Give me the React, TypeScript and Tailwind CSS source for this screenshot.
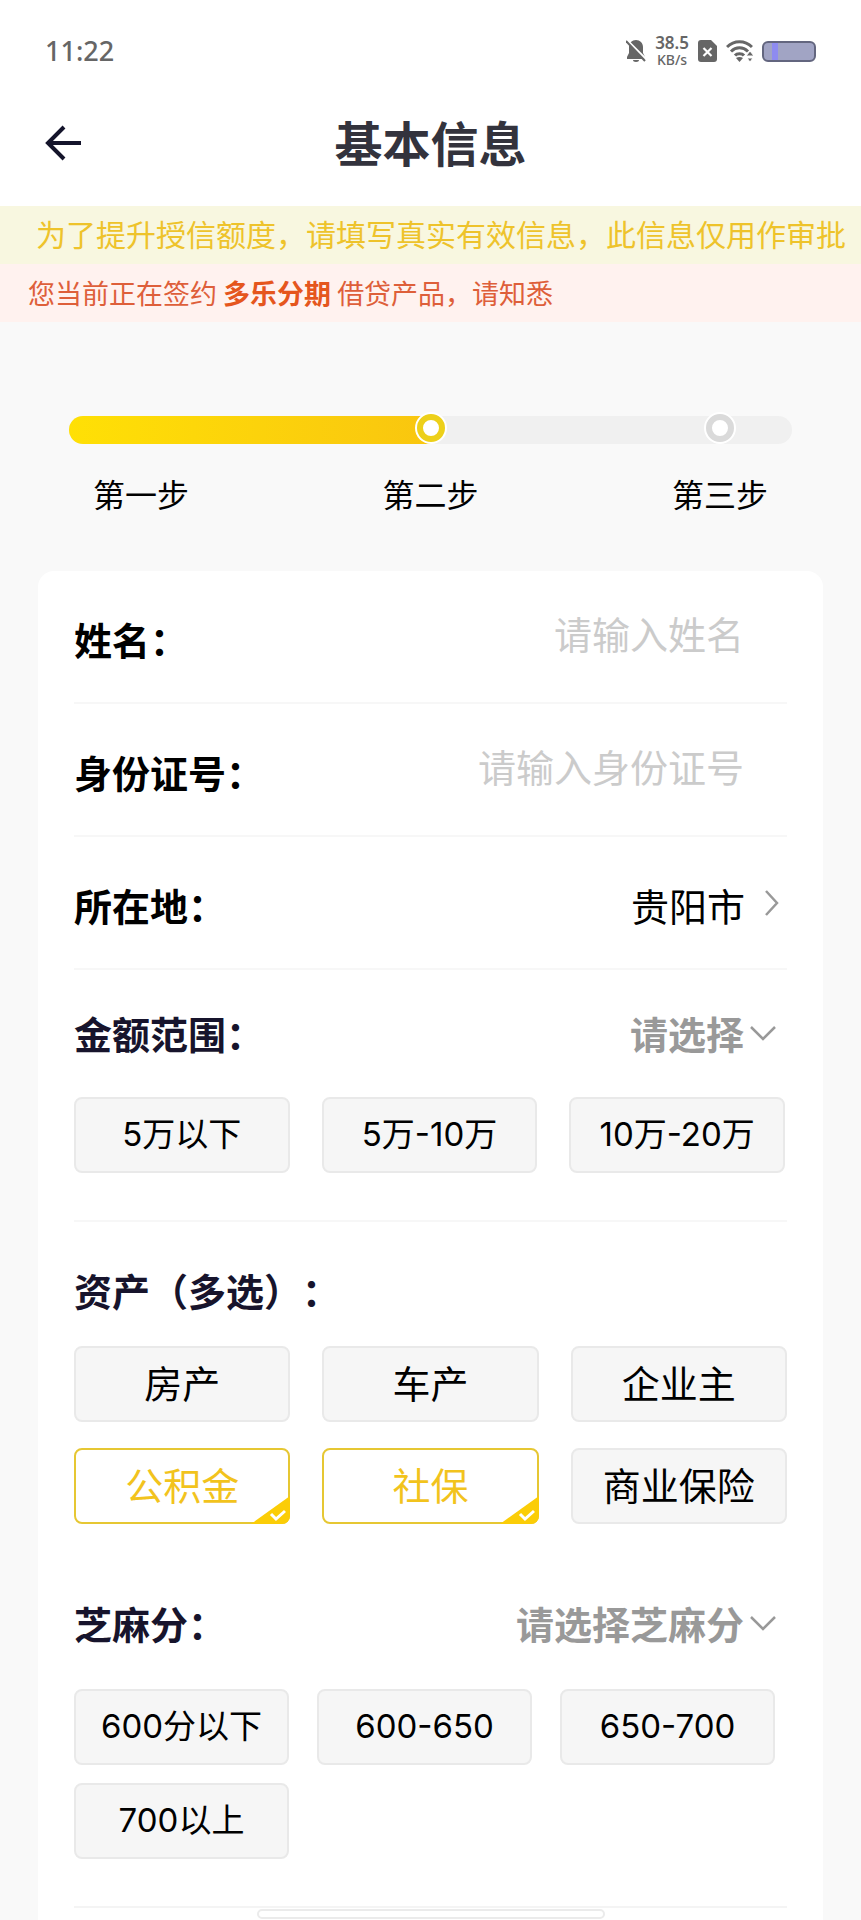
import { useState } from "react";
import type { ReactNode } from "react";

const amounts = ["5万以下", "5万-10万", "10万-20万"];
const assets = ["房产", "车产", "企业主", "公积金", "社保", "商业保险"];
const scores = ["600分以下", "600-650", "650-700", "700以上"];
const steps = ["第一步", "第二步", "第三步"];

export default function App() {
  const [owned, setOwned] = useState<string[]>(["公积金", "社保"]);
  const [amount, setAmount] = useState("");
  const [score, setScore] = useState("");

  function toggleAsset(name: string) {
    setOwned((list) =>
      list.includes(name) ? list.filter((n) => n !== name) : [...list, name],
    );
  }

  return (
    <div className="min-h-screen overflow-hidden bg-[#f9f9f9] font-['Noto_Sans_CJK_SC',sans-serif] text-black [text-spacing-trim:space-all]">
      <div className="bg-white">
        <StatusBar />
        <header className="grid h-[126px] grid-cols-[1fr_auto_1fr] items-center px-[45px]">
          <button type="button" aria-label="返回" className="w-9">
            <svg viewBox="0 0 36 36" fill="none" className="h-9 w-9">
              <path
                d="M36 18H3M19 2 3 18l16 16"
                stroke="#14142b"
                strokeWidth="4"
              />
            </svg>
          </button>
          <h1 className="pb-1 text-[48px] leading-[60px] font-bold text-[#33333d]">
            基本信息
          </h1>
        </header>
      </div>

      <p className="flex h-[58px] items-center overflow-hidden bg-[#f8f7e0] pb-1 pl-9 text-[30px] whitespace-nowrap text-[#eec32b]">
        为了提升授信额度，请填写真实有效信息，此信息仅用作审批
      </p>
      <p className="h-[58px] bg-[#fff2ef] px-7 text-[27px] leading-[58px] text-[#de5f3a]">
        您当前正在签约 <b className="text-[#e5561d]">多乐分期</b>{" "}
        借贷产品，请知悉
      </p>

      <StepProgress />

      <form className="mx-[38px] mt-[54px] rounded-t-2xl bg-white px-9">
        <Row>
          <RowLabel htmlFor="name">姓名：</RowLabel>
          <TextField id="name" placeholder="请输入姓名" />
        </Row>
        <Row>
          <RowLabel htmlFor="idcard">身份证号：</RowLabel>
          <TextField id="idcard" placeholder="请输入身份证号" />
        </Row>
        <Row>
          <span id="city" className="pt-1 text-[38px] font-bold">
            所在地：
          </span>
          <button
            type="button"
            aria-describedby="city"
            className="ml-auto flex items-center gap-5 pr-2"
          >
            <span className="pt-1 text-[38px]">贵阳市</span>
            <svg viewBox="0 0 14 26" fill="none" className="h-[26px] w-[14px]">
              <path d="m1 1 11 12L1 25" stroke="#999" strokeWidth="2.5" />
            </svg>
          </button>
        </Row>

        <section className="border-b-2 border-[#f7f7f7] pb-[47px]">
          <div className="flex h-[127px] items-center pb-0.5">
            <SectionLabel htmlFor="amount">金额范围：</SectionLabel>
            <DropDown
              id="amount"
              placeholder="请选择"
              options={amounts}
              value={amount}
              onChange={setAmount}
            />
          </div>
          <div className="grid grid-cols-3 gap-8 pr-0.5">
            {amounts.map((name) => (
              <Chip
                key={name}
                active={amount === name}
                onClick={() => setAmount(name)}
              >
                {name}
              </Chip>
            ))}
          </div>
        </section>

        <fieldset>
          <legend className="h-[124px] pt-3 text-[38px] leading-[112px] font-bold text-[#17142c]">
            资产（多选）：
          </legend>
          <div className="grid grid-cols-3 gap-x-8 gap-y-[26px]">
            {assets.map((name) => (
              <AssetChip
                key={name}
                label={name}
                checked={owned.includes(name)}
                onChange={() => toggleAsset(name)}
              />
            ))}
          </div>
        </fieldset>

        <section className="border-b-2 border-[#f4f4f4] pt-[34px] pb-[47px]">
          <div className="flex h-[131px] items-center pb-0.5">
            <SectionLabel htmlFor="score">芝麻分：</SectionLabel>
            <DropDown
              id="score"
              placeholder="请选择芝麻分"
              options={scores}
              value={score}
              onChange={setScore}
            />
          </div>
          <div className="grid grid-cols-3 gap-x-7 gap-y-[18px] pr-3">
            {scores.map((name) => (
              <Chip
                key={name}
                active={score === name}
                onClick={() => setScore(name)}
              >
                {name}
              </Chip>
            ))}
          </div>
        </section>
        <div className="h-3" />
      </form>

      <div className="fixed bottom-px left-1/2 h-[10px] w-[348px] -translate-x-1/2 rounded-full border-2 border-[#ebebeb] bg-white" />
    </div>
  );
}

function StatusBar() {
  return (
    <div className="flex h-20 items-center justify-between px-[45px] pt-[22px] font-['Noto_Sans',sans-serif] text-[#666]">
      <time className="text-[27px] leading-8 font-medium">11:22</time>
      <div className="flex items-center gap-[9px]">
        <svg viewBox="0 0 20 22" className="h-[22px] w-5">
          <path
            d="M10 0c4 0 7 3 7 7v6l2 4v2H1v-2l2-4V7c0-4 3-7 7-7ZM7 20h6c0 1-1 2-3 2s-3-1-3-2Z"
            fill="currentColor"
          />
          <path d="m1 0 20 20" stroke="#fff" strokeWidth="2" />
          <path d="m0 1 19 20" stroke="currentColor" strokeWidth="2" />
        </svg>
        <div className="text-center">
          <div className="text-[17px] leading-[18px] font-semibold">38.5</div>
          <div className="text-[14px] leading-4 font-medium">KB/s</div>
        </div>
        <svg viewBox="0 0 19 22" className="h-[22px] w-[19px]">
          <path
            d="M3 0h10l6 6v13a3 3 0 0 1-3 3H3a3 3 0 0 1-3-3V3a3 3 0 0 1 3-3Z"
            fill="currentColor"
          />
          <path d="m5.500 8 8 8m0-8-8 8" stroke="#fff" strokeWidth="2.200" />
        </svg>
        <svg viewBox="0 0 27 22" fill="none" className="h-[22px] w-[27px]">
          <path
            d="M1 7c7-7 18-7 25 0M5 11.500c5-5 12-5 17 0M9 15.500c2-2.500 7-2.500 9 0"
            stroke="currentColor"
            strokeWidth="3"
          />
          <path d="m13.500 22-3.500-4c2-1.500 5-1.500 7 0Z" fill="currentColor" />
          <path
            d="m24 11 4 5h-8Zm0 11-3-4h6Z"
            fill="currentColor"
            stroke="#fff"
          />
        </svg>
        <div className="flex h-[21px] w-[54px] rounded-md border-2 border-[#63667f] bg-[#a1a4c4] pl-2">
          <div className="w-1.5 bg-[#8e8bf0]" />
        </div>
      </div>
    </div>
  );
}

function StepProgress() {
  return (
    <div className="mx-[69px] pt-[94px]">
      <div className="relative h-7 rounded-full bg-[#f0f0f0]">
        <div className="h-full w-1/2 rounded-l-full bg-linear-to-r from-[#ffe005] to-[#f9c60f]" />
        <StepDot className="left-1/2 -translate-x-1/2 border-[#edd01a]" />
        <StepDot className="right-[58px] border-[#dadada]" />
      </div>
      <ol className="flex justify-between px-6 pt-[25px] text-[32px] leading-[48px]">
        {steps.map((step) => (
          <li key={step}>{step}</li>
        ))}
      </ol>
    </div>
  );
}

function StepDot({ className }: { className: string }) {
  return (
    <span
      className={`absolute -top-0.5 h-7 w-7 rounded-full border-[6px] bg-white ring-2 ring-white ${className}`}
    />
  );
}

function Row({ children }: { children: ReactNode }) {
  return (
    <div className="flex h-[133px] items-center border-b-2 border-[#f7f7f7]">
      {children}
    </div>
  );
}

function RowLabel({
  htmlFor,
  children,
}: {
  htmlFor: string;
  children: ReactNode;
}) {
  return (
    <label
      htmlFor={htmlFor}
      className="shrink-0 pt-1 text-[38px] font-bold"
    >
      {children}
    </label>
  );
}

function SectionLabel({
  htmlFor,
  children,
}: {
  htmlFor: string;
  children: ReactNode;
}) {
  return (
    <label
      htmlFor={htmlFor}
      className="shrink-0 text-[38px] font-bold text-[#17142c]"
    >
      {children}
    </label>
  );
}

function TextField({ id, placeholder }: { id: string; placeholder: string }) {
  return (
    <input
      id={id}
      type="text"
      placeholder={placeholder}
      className="h-16 min-w-0 flex-1 pr-[43px] pb-2 text-right text-[38px] placeholder:text-[#cbcbcb] focus:outline-none"
    />
  );
}

function DropDown({
  id,
  placeholder,
  options,
  value,
  onChange,
}: {
  id: string;
  placeholder: string;
  options: string[];
  value: string;
  onChange: (value: string) => void;
}) {
  return (
    <div className="relative ml-auto">
      <select
        id={id}
        value={value}
        onChange={(e) => onChange(e.target.value)}
        className="appearance-none pr-[43px] text-right text-[38px] font-bold text-[#999] focus:outline-none"
      >
        <option value="">{placeholder}</option>
        {options.map((option) => (
          <option key={option}>{option}</option>
        ))}
      </select>
      <svg
        viewBox="0 0 26 16"
        fill="none"
        className="pointer-events-none absolute top-1/2 right-[11px] h-4 w-[26px] -translate-y-1/2"
      >
        <path d="m1 2 12 12L25 2" stroke="#999" strokeWidth="2.5" />
      </svg>
    </div>
  );
}

function Chip({
  active,
  onClick,
  children,
}: {
  active: boolean;
  onClick: () => void;
  children: ReactNode;
}) {
  return (
    <button
      type="button"
      aria-pressed={active}
      onClick={onClick}
      className={`h-[76px] rounded-lg border-2 font-[Inter,'Noto_Sans_CJK_SC',sans-serif] text-[33px] whitespace-nowrap ${
        active
          ? "border-[#e6c733] bg-white text-[#f2c31d]"
          : "border-[#e9e9e9] bg-[#f6f6f6]"
      }`}
    >
      {children}
    </button>
  );
}

function AssetChip({
  label,
  checked,
  onChange,
}: {
  label: string;
  checked: boolean;
  onChange: () => void;
}) {
  return (
    <label
      className={`relative flex h-[76px] items-center justify-center rounded-lg border-2 pb-1.5 text-[38px] whitespace-nowrap ${
        checked
          ? "border-[#e6c733] bg-white text-[#f2c31d]"
          : "border-[#e9e9e9] bg-[#f6f6f6]"
      }`}
    >
      <input
        type="checkbox"
        checked={checked}
        onChange={onChange}
        className="sr-only"
      />
      {label}
      {checked && (
        <svg
          viewBox="0 0 39 28"
          fill="none"
          className="absolute -right-0.5 -bottom-0.5 h-7 w-[39px] rounded-br-lg"
        >
          <path d="M39 0v28H0Z" fill="#fbcd07" />
          <path d="m20 18 5 5 9-8" stroke="#fff" strokeWidth="3" />
        </svg>
      )}
    </label>
  );
}
